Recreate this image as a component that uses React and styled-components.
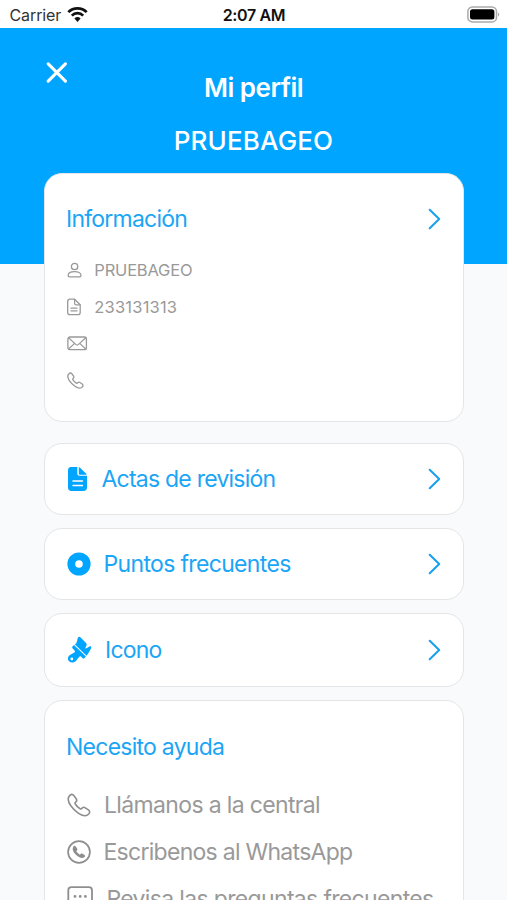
import React from "react";
import styled, { createGlobalStyle } from "styled-components";

const GlobalStyle = createGlobalStyle`
  * {
    box-sizing: border-box;
  }

  body {
    margin: 0;
    overflow: hidden;
    background: #f8fafb;
    font-family: Inter, "Liberation Sans", sans-serif;
  }
`;

const Screen = styled.div`
  display: flex;
  flex-direction: column;
  height: 900px;
  overflow: hidden;
`;

const StatusBar = styled.div`
  flex: none;
  display: grid;
  grid-template-columns: 1fr auto 1fr;
  align-items: center;
  height: 28px;
  padding: 1px 7.5px 0 9.5px;
  background: white;
  color: #111;
  font-size: 16px;
`;

const Carrier = styled.div`
  display: flex;
  align-items: center;
  gap: 6px;
  color: #333;
  letter-spacing: -0.1px;
`;

const Clock = styled.div`
  margin-left: -1px;
  font-weight: 600;
  letter-spacing: -0.35px;
`;

const Battery = styled.div`
  display: flex;
  justify-content: flex-end;
`;

const Header = styled.header`
  flex: none;
  height: 236px;
  padding: 34px 44px 0;
  background: #00a5ff;
  color: white;
`;

const CloseButton = styled.button`
  display: flex;
  margin: 0 0 0 2px;
  padding: 0;
  border: 0;
  background: none;
  color: inherit;
`;

const Title = styled.h1`
  margin: ${({ $top }) => $top}px 0 0;
  font-size: 26px;
  line-height: 30px;
  font-weight: ${({ $weight }) => $weight};
  letter-spacing: ${({ $spacing }) => $spacing}px;
  text-align: center;
`;

const Content = styled.main`
  display: flex;
  flex-direction: column;
  margin-top: -91px;
  padding: 0 43.5px;
`;

const Card = styled.section`
  flex: none;
  height: ${({ $height }) => $height}px;
  margin-bottom: ${({ $gap }) => $gap || 13}px;
  padding: ${({ $top }) => $top || 0}px 21.5px 0 21.5px;
  border: 1px solid #e3e5e7;
  border-radius: 18px;
  background: white;
`;

const LinkCard = styled(Card)`
  display: flex;
  align-items: center;
  padding-left: 22.5px;
  color: #00a5ff;
`;

const CardHeader = styled.div`
  display: flex;
  align-items: center;
  height: 30px;
`;

const Label = styled.span`
  flex: 1;
  margin-left: ${({ $left }) => $left || 0}px;
  color: #1ba5f5;
  font-size: 23px;
  line-height: 30px;
  letter-spacing: ${({ $spacing }) => $spacing}px;
  white-space: nowrap;
`;

const InfoList = styled.div`
  display: grid;
  grid-auto-rows: 36.7px;
  margin: 18px 0 0 0.8px;
`;

const InfoRow = styled.div`
  display: grid;
  grid-template-columns: 27.5px 1fr;
  align-items: center;
  color: #999;
  font-size: 16.5px;
  letter-spacing: ${({ $spacing }) => $spacing || 0}px;
`;

const HelpList = styled.div`
  display: grid;
  grid-auto-rows: 47.2px;
  margin: 19px 0 0 1px;
`;

const HelpRow = styled.div`
  display: flex;
  align-items: center;
  color: #8e8e8e;
`;

const HelpLabel = styled(Label)`
  color: #999;
`;

const Icon = styled.svg`
  display: block;
  flex: none;
  fill: none;
  stroke: currentColor;
  stroke-width: 1.5;
  stroke-linecap: round;
  stroke-linejoin: round;
`;

const ChevronIcon = styled(Icon)`
  color: #1ba0ee;
`;

const Chevron = () => (
  <ChevronIcon width="13" height="22" viewBox="0 0 13 22">
    <path d="M1.7 1.8 11.2 11 1.7 20.2" strokeWidth="2.1" />
  </ChevronIcon>
);

const WifiIcon = () => (
  <Icon width="21" height="16" viewBox="0 0 21 16">
    <g stroke="#111">
      <path d="M1.3 5.1a13.2 13.2 0 0 1 18.4 0M4.8 8.6a8 8 0 0 1 11.4 0" strokeWidth="2.7" strokeLinecap="butt" />
      <path d="M7.4 11.5a4.5 4.5 0 0 1 6.2 0L10.5 15Z" fill="#111" stroke="none" />
    </g>
  </Icon>
);

const BatteryIcon = () => (
  <Icon width="33" height="17" viewBox="0 0 33 17">
    <rect x=".9" y=".9" width="28.6" height="15" rx="4.5" stroke="#aaa" strokeWidth="1.5" />
    <rect x="3" y="3.2" width="24.4" height="10.4" rx="2.5" fill="#000" stroke="none" />
    <path d="M31 6.5c1.7.6 1.7 3.4 0 4Z" fill="#aaa" stroke="none" />
  </Icon>
);

const CloseIcon = () => (
  <Icon width="22" height="22" viewBox="0 0 22 22">
    <path d="m2.2 1.8 17.2 17.4M19.4 1.8 2.2 19.2" strokeWidth="3.1" />
  </Icon>
);

const UserIcon = () => (
  <Icon width="16" height="17" viewBox="0 0 16 17">
    <circle cx="7.6" cy="4.5" r="3.2" strokeWidth="1.3" />
    <path d="M1.2 13.4c0-2.6 3-3.8 6.4-3.8s6.4 1.2 6.4 3.8c0 1-.5 1.4-1.5 1.4H2.7c-1 0-1.5-.4-1.5-1.4Z" strokeWidth="1.3" />
  </Icon>
);

const DocumentIcon = () => (
  <Icon width="16" height="18" viewBox="0 0 16 18">
    <path d="M2.9 1.2h4.7l5.6 5.6v7.7c0 1.5-.7 2.2-2.2 2.2H2.9c-1.5 0-2.2-.7-2.2-2.2v-11c0-1.5.7-2.3 2.2-2.3Z" strokeWidth="1.3" />
    <path d="M7.6 1.4v4.2c0 .8.4 1.2 1.2 1.2H13M4 10.2h6M4 12.9h6" strokeWidth="1.2" />
  </Icon>
);

const MailIcon = () => (
  <Icon width="21" height="15" viewBox="0 0 21 15">
    <rect x=".9" y="1" width="18.5" height="12.7" rx="2" strokeWidth="1.3" />
    <path d="m1.6 1.7 7.1 6.7c.9.8 2 .8 2.9 0l7.1-6.7M1.6 13l6-5.6M18.7 13l-6-5.6" strokeWidth="1.2" />
  </Icon>
);

const PhoneIcon = ({ size = 17, line = 1.9 }) => (
  <Icon width={size} height={size} viewBox="0 0 24 24">
    <path
      d="M2 3.5C3.6.9 5.5.7 7 2.7l2.2 3c.8 1.1.7 2.2-.3 3.2l-.6.7c-.4.5-.3.9 0 1.4.9 1.6 3.2 3.9 4.8 4.8.5.3.9.3 1.3-.1l.7-.6c1-1 2.1-1.1 3.2-.3l3.1 2.1c1.9 1.4 1.7 3.3-.7 4.9-2.2 1.5-5.6 1-9.5-1.7a31 31 0 0 1-7.4-7.3C1.2 9.1.5 5.9 2 3.5Z"
      strokeWidth={line}
    />
  </Icon>
);

const DocumentFillIcon = () => (
  <Icon width="22" height="26" viewBox="0 0 22 26">
    <path
      d="M4 1h6.3v6.3c0 1.7.8 2.5 2.5 2.5H20v11.7c0 2.3-1.2 3.5-3.5 3.5h-12C2.2 25 1 23.8 1 21.5v-17C1 2.2 2 1 4 1Z"
      fill="currentColor"
      stroke="none"
    />
    <path d="M11.8 1.1c.6.2 1 .5 1.5 1l5.4 5.2c.5.5.9.9 1 1.4h-6.6c-.9 0-1.3-.4-1.3-1.3Z" fill="currentColor" stroke="none" />
    <path d="M6 15h9.5M6 19.5h9.5" stroke="#fff" strokeWidth="1.4" />
  </Icon>
);

const PointIcon = () => (
  <Icon width="24" height="24" viewBox="0 0 24 24">
    <circle cx="12" cy="12" r="7.7" strokeWidth="7.8" />
  </Icon>
);

// the white diagonal separates the bristles from the handle
const BrushIcon = () => (
  <Icon width="26" height="28" viewBox="0 0 26 28">
    <path
      d="M13.4 1.2 19 7c.8.9.9 1.8.3 2.9l-.8 1.6c-.3.7.2 1.1.9.8l2.7-1.6c1.5-.9 2.6.2 2 1.6-.8 2-2.3 4.4-4.4 7.3l-2.1 2.3c-.7.7-1.4.7-2.1 0l-1.3-1.2c-.8-.7-1.6-.6-2.1.2l-3 3.9c-2.6 3.3-8.2 1.7-8.2-2.1 0-1.7.9-2.9 2.5-3.9l3.9-2.3c.8-.5.9-1.2.3-1.9l-2-2.2c-.7-.8-.6-1.5.1-2.2l1.4-1.1c1.9-1.2 2.9-2.7 3.2-5.1.2-2.6 1.5-4.2 3.1-2.8Z"
      fill="currentColor"
      stroke="none"
    />
    <path d="m7.6 8.8 11.9 11.6" stroke="#fff" strokeWidth="1.1" />
    <circle cx="4.8" cy="23" r="1.4" fill="#fff" stroke="none" />
  </Icon>
);

const WhatsAppIcon = () => (
  <Icon width="24" height="24" viewBox="0 0 24 24">
    <circle cx="12" cy="12" r="10.9" strokeWidth="1.7" />
    <path
      d="M5.8 7.9c.5-1.8 1.9-2.8 3-1.4l1.3 1.9c.5.8.4 1.5-.2 2.1l-.4.5c-.2.4 0 .7.3 1.1l2.3 2.1c.3.3.7.4 1.1.1l.5-.4c.7-.5 1.3-.5 2.1 0l1.8 1.2c1 .8.5 1.8-.7 2.5-2.1 1.2-5.4-.1-8.2-3-2.1-2.2-3.4-4.7-2.9-6.7Z"
      fill="currentColor"
      stroke="none"
    />
  </Icon>
);

const MessageIcon = () => (
  <Icon width="27" height="26" viewBox="0 0 27 26">
    <path d="M4.5 1.2h17.3c2.1 0 3.2 1.1 3.2 3.2v12c0 2.1-1.1 3.2-3.2 3.2H13l-5 4.2v-4.2H4.5c-2.1 0-3.2-1.1-3.2-3.2v-12c0-2.1 1.1-3.2 3.2-3.2Z" strokeWidth="1.8" />
    <path d="M8 10.4h.01M13.2 10.4h.01M18.4 10.4h.01" strokeWidth="2.8" />
  </Icon>
);

const links = [
  { label: "Actas de revisión", icon: <DocumentFillIcon />, left: 12.5, spacing: -0.77, height: 72 },
  { label: "Puntos frecuentes", icon: <PointIcon />, left: 12.5, spacing: -0.66, height: 72 },
  { label: "Icono", icon: <BrushIcon />, left: 12, spacing: -0.8, height: 74 },
];

const App = () => (
  <>
    <GlobalStyle />
    <Screen>
      <StatusBar>
        <Carrier>
          Carrier
          <WifiIcon />
        </Carrier>
        <Clock>2:07 AM</Clock>
        <Battery>
          <BatteryIcon />
        </Battery>
      </StatusBar>

      <Header>
        <CloseButton aria-label="Cerrar">
          <CloseIcon />
        </CloseButton>
        <Title $top={-11} $weight={600} $spacing={-0.5}>Mi perfil</Title>
        <Title $top={23} $weight={550} $spacing={0.15}>PRUEBAGEO</Title>
      </Header>

      <Content>
        <Card $height={249} $top={30} $gap={21}>
          <CardHeader>
            <Label $spacing={-0.78}>Información</Label>
            <Chevron />
          </CardHeader>
          <InfoList>
            <InfoRow $spacing={-0.2}>
              <UserIcon />
              PRUEBAGEO
            </InfoRow>
            <InfoRow $spacing={0.2}>
              <DocumentIcon />
              233131313
            </InfoRow>
            <InfoRow>
              <MailIcon />
            </InfoRow>
            <InfoRow>
              <PhoneIcon />
            </InfoRow>
          </InfoList>
        </Card>

        {links.map((link) => (
          <LinkCard key={link.label} $height={link.height}>
            {link.icon}
            <Label $left={link.left} $spacing={link.spacing}>{link.label}</Label>
            <Chevron />
          </LinkCard>
        ))}

        <Card $height={300} $top={31}>
          <CardHeader>
            <Label $spacing={-0.75}>Necesito ayuda</Label>
          </CardHeader>
          <HelpList>
            <HelpRow>
              <PhoneIcon size={24} line={1.6} />
              <HelpLabel $left={13} $spacing={-0.65}>Llámanos a la central</HelpLabel>
            </HelpRow>
            <HelpRow>
              <WhatsAppIcon />
              <HelpLabel $left={12.5} $spacing={-0.72}>Escribenos al WhatsApp</HelpLabel>
            </HelpRow>
            <HelpRow>
              <MessageIcon />
              <HelpLabel $left={12.5} $spacing={-0.66}>Revisa las preguntas frecuentes</HelpLabel>
            </HelpRow>
          </HelpList>
        </Card>
      </Content>
    </Screen>
  </>
);

export default App;
